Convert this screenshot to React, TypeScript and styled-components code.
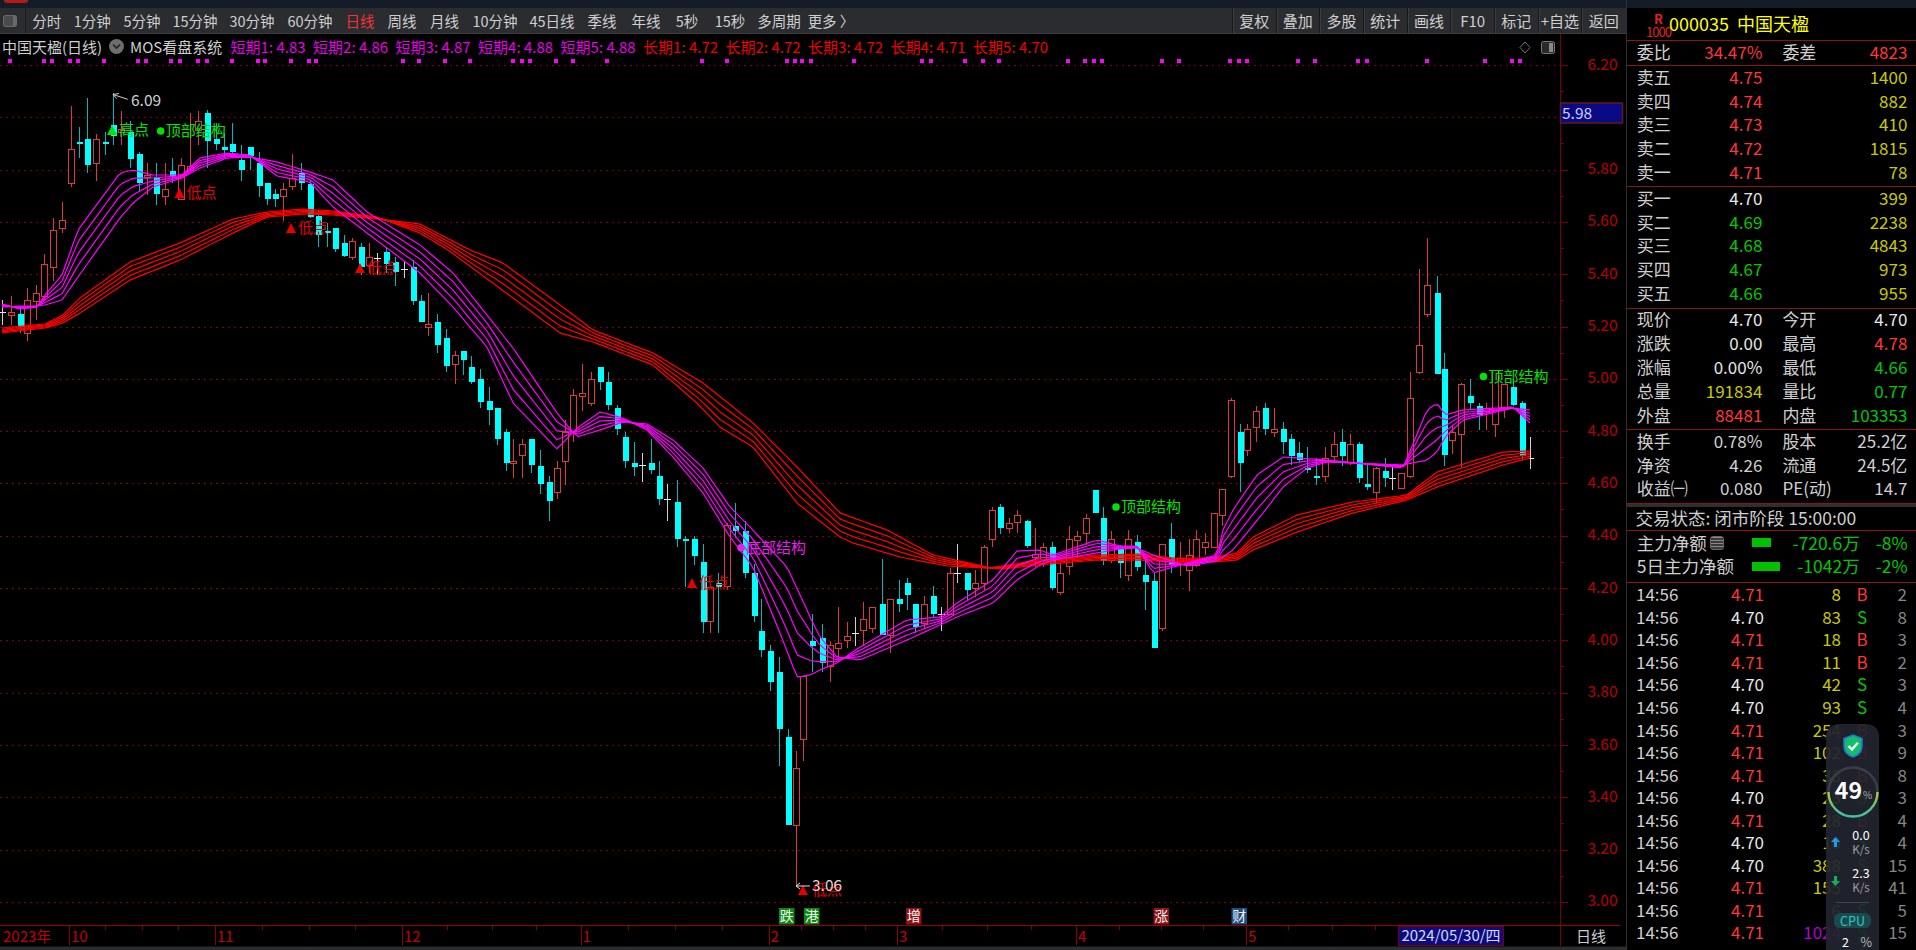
import React from "react";
import styled, { createGlobalStyle } from "styled-components";

const FONT = `"Noto Sans CJK SC", "Noto Sans", sans-serif`;
const RED = "#ff3636";
const GREEN = "#00c800";
const YELLOW = "#c8c800";
const LIGHT = "#cfcfcf";
const WHITE = "#e6e6e6";
const LINE = "#8e1212";

const Global = createGlobalStyle`
  html, body { margin: 0; padding: 0; background: #000; overflow: hidden; }
  #root { width: 1916px; height: 950px; }
  * { box-sizing: border-box; }
`;

const Page = styled.div`
  width: 1916px;
  height: 950px;
  background: #000;
  display: flex;
  flex-direction: column;
  font-family: ${FONT};
  color: ${LIGHT};
  overflow: hidden;
`;
const TopBar = styled.div`
  height: 8px;
  flex: none;
  background: #141c27;
  padding-left: 4px;
`;
const RedTab = styled.div`
  width: 24px;
  height: 3px;
  background: #b51a1a;
  border-radius: 0 0 4px 4px;
`;
const Main = styled.div`
  flex: 1;
  min-height: 0;
  display: flex;
`;
const LeftColumn = styled.div`
  width: 1626px;
  flex: none;
  display: flex;
  flex-direction: column;
`;
const Toolbar = styled.div`
  height: 26px;
  flex: none;
  display: flex;
  align-items: stretch;
  background: #2a2c2f;
  border-bottom: 1px solid #3c3d40;
  padding-right: 1px;
`;
const ToggleBox = styled.div`
  width: 26px;
  flex: none;
  display: flex;
  align-items: center;
  padding-left: 3px;
  border-right: 1px solid #1c1d1f;
`;
const ToggleIcon = styled.div`
  width: 14px;
  height: 12px;
  border-radius: 3px;
  background: #4a4b4d;
  border: 1px solid #6a6a6a;
  border-right-width: 4px;
`;
const Tab = styled.div<{ $w: number; $active?: boolean }>`
  width: ${(p) => p.$w}px;
  flex: none;
  display: flex;
  align-items: center;
  justify-content: center;
  white-space: pre;
  font-size: 14.5px;
  color: ${(p) => (p.$active ? "#f03434" : LIGHT)};
`;
const ToolRight = styled.div`
  margin-left: auto;
  display: flex;
`;
const ToolButton = styled.div`
  width: 43.7px;
  display: flex;
  align-items: center;
  justify-content: center;
  white-space: nowrap;
  font-size: 15px;
  color: ${LIGHT};
  border-left: 1px solid #161718;
  box-shadow: inset 1px 0 0 #3c3d40;
`;
const ChartArea = styled.div`
  position: relative;
  flex: 1;
  min-height: 0;
  overflow: hidden;
`;
const TitleRow = styled.div`
  position: absolute;
  left: 2px;
  top: 0;
  height: 24px;
  display: flex;
  align-items: center;
  font-size: 15px;
  white-space: nowrap;
`;
const StockTitle = styled.span`
  width: 107px;
  color: #cfcfcf;
`;
const RoundIcon = styled.span`
  width: 15px;
  height: 15px;
  border-radius: 50%;
  background: #6e6e6e;
  display: flex;
  align-items: center;
  justify-content: center;
  margin-right: 6px;
`;
const SystemName = styled.span`
  width: 100.6px;
  color: #cfcfcf;
`;
const Indicator = styled.span<{ $c: string }>`
  width: 82.5px;
  flex: none;
  color: ${(p) => p.$c};
`;
const ChartSvg = styled.svg`
  display: block;
  font-family: ${FONT};
`;

/* right panel */
const Panel = styled.div`
  position: relative;
  flex: 1;
  margin-top: -8px;
  background: #000;
  display: flex;
  flex-direction: column;
  border-left: 1px solid #2e2e2e;
  overflow: hidden;
`;
const Notch = styled.div`
  height: 8px;
  flex: none;
  background: #141c27;
  margin-left: -1px;
`;
const Section = styled.div<{ $h: number; $line?: boolean }>`
  height: ${(p) => p.$h + (p.$line === false ? 0 : 1)}px;
  flex: none;
  ${(p) => (p.$line === false ? "" : `border-bottom: 1px solid ${LINE};`)}
`;
const Header = styled.div`
  display: flex;
  align-items: center;
  height: 100%;
  padding: 0 0 2px 21px;
  color: #ffff00;
  font-size: 18px;
  white-space: nowrap;
`;
const Rank = styled.div`
  width: 21px;
  flex: none;
  margin-top: 4px;
  display: flex;
  flex-direction: column;
  align-items: center;
  color: #e02020;
  font-size: 13px;
  line-height: 13px;
  font-weight: 700;
`;
const RankNum = styled.span`
  font-weight: 400;
  font-size: 13px;
  letter-spacing: -1px;
`;
const Code = styled.span`
  margin-right: 8px;
`;
const InfoRow = styled.div<{ $h: number }>`
  display: grid;
  grid-template-columns: 64px 61.7px 20px 64px 61px;
  height: ${(p) => p.$h}px;
  align-items: center;
  padding-left: 9.7px;
  font-size: 17px;
  line-height: 20px;
  white-space: nowrap;
`;
const Label = styled.span`
  color: ${LIGHT};
`;
const Value = styled.span<{ $c?: string; $wide?: boolean }>`
  color: ${(p) => p.$c || WHITE};
  text-align: right;
  ${(p) => (p.$wide ? "grid-column: 4 / 6;" : "")}
`;
const Shift = styled.div<{ $y: number }>`
  margin-top: ${(p) => p.$y}px;
`;
const Band = styled.div`
  height: 3px;
  flex: none;
  background: #2f2f2f;
`;
const Status = styled.div`
  height: 100%;
  display: flex;
  align-items: center;
  padding: 0 0 3px 8.5px;
  font-size: 17.5px;
  white-space: nowrap;
  color: ${LIGHT};
`;
const FundRow = styled.div`
  display: grid;
  grid-template-columns: 115px 108px 48px;
  height: 23.4px;
  align-items: center;
  padding-left: 9.7px;
  font-size: 17.5px;
  line-height: 20px;
  white-space: nowrap;
`;
const FundLabel = styled.span`
  display: flex;
  align-items: center;
  gap: 3px;
  color: ${LIGHT};
`;
const DocIcon = styled.span`
  width: 14px;
  height: 14px;
  border-radius: 3px;
  border: 1px solid #666;
  background: repeating-linear-gradient(#8a8a8a 0 1px, #3a3a3a 1px 3px);
`;
const FundBarCell = styled.span`
  display: flex;
  align-items: center;
  justify-content: space-between;
  color: ${GREEN};
`;
const FundBar = styled.span<{ $w: number }>`
  width: ${(p) => p.$w}px;
  height: 9px;
  background: #00c000;
`;
const FundPct = styled.span`
  text-align: right;
  color: ${GREEN};
`;
const TickList = styled.div`
  flex: 1;
  margin-top: -2px;
  padding-top: 2px;
  overflow: hidden;
`;
const TickRow = styled.div`
  display: grid;
  grid-template-columns: 95px 40px 70px 42px 24px;
  height: 22.55px;
  align-items: center;
  padding-left: 9px;
  font-size: 17px;
  line-height: 20px;
  white-space: nowrap;
`;
const TickTime = styled.span`
  color: ${LIGHT};
`;
const TickPrice = styled.span<{ $up: boolean }>`
  color: ${(p) => (p.$up ? RED : WHITE)};
`;
const TickVol = styled.span<{ $big?: boolean }>`
  text-align: right;
  color: ${(p) => (p.$big ? "#b000d8" : YELLOW)};
`;
const TickSide = styled.span<{ $buy: boolean }>`
  text-align: center;
  color: ${(p) => (p.$buy ? RED : GREEN)};
`;
const TickCount = styled.span`
  text-align: right;
  color: #858585;
`;

/* floating monitor */
const Monitor = styled.div`
  position: absolute;
  left: 199px;
  top: 724px;
  width: 53px;
  height: 240px;
  border-radius: 12px;
  background: rgba(33, 37, 46, 0.93);
  display: flex;
  flex-direction: column;
  align-items: center;
  padding-top: 10px;
  color: #fff;
`;
const Ring = styled.div`
  display: grid;
  width: 52px;
  height: 52px;
  margin-top: 8px;
  align-items: center;
  justify-items: center;
  & > * {
    grid-area: 1 / 1;
  }
`;
const RingLabel = styled.div`
  display: flex;
  align-items: baseline;
  font-size: 23px;
  line-height: 26px;
  font-weight: 700;
  padding-left: 2px;
`;
const RingPct = styled.span`
  font-size: 10px;
  font-weight: 400;
  color: #a8abb2;
  margin-left: 1px;
`;
const Speed = styled.div`
  display: grid;
  grid-template-columns: 12px 1fr;
  width: 100%;
  margin-top: 10px;
  padding-left: 5px;
  align-items: center;
`;
const SpeedText = styled.div`
  display: flex;
  flex-direction: column;
  align-items: center;
  font-size: 12.5px;
  line-height: 14px;
`;
const SpeedUnit = styled.span`
  color: #9a9ea6;
  font-size: 11.5px;
`;
const Divider = styled.div`
  width: 33px;
  height: 1px;
  margin-top: 8px;
  background: #3b4450;
`;
const CpuPill = styled.div`
  width: 37px;
  height: 15px;
  margin-top: 10px;
  border-radius: 6px;
  background: #1b4a4e;
  color: #2fc6c6;
  font-size: 12.5px;
  line-height: 15px;
  text-align: center;
`;
const CpuValue = styled.div`
  width: 100%;
  margin-top: 7px;
  display: flex;
  justify-content: space-between;
  padding: 0 7px 0 16px;
  font-size: 12.5px;
  line-height: 14px;
`;
const CpuPct = styled.span`
  color: #b5b8be;
`;

/* ---------- chart data (coordinates read from the reference) ---------- */
type C = [number, number, number, number, number, string];
const groups: { ox: number; oy: number; d: C[] }[] = [
  { ox: 0, oy: 90, d: [
    [6,630,665,665,705,"w"],[32,618,665,673,705,"r"],[60,650,672,710,730,"c"],[82,595,630,730,752,"r"],[107,585,608,632,690,"r"],
    [133,492,522,618,630,"r"],[160,385,420,530,572,"r"],[186,335,390,415,430,"r"],[212,47,178,280,290,"r"],[236,110,155,162,205,"c"],
    [262,25,148,225,250,"c"],[288,133,148,220,272,"r"],[315,125,155,162,195,"c"],[340,10,105,138,165,"c"],[363,62,118,126,165,"r"],
    [390,92,125,205,235,"c"],[416,185,192,278,305,"c"],[441,220,255,262,315,"r"],[468,220,262,312,345,"c"],[494,220,298,320,345,"r"],
    [517,205,242,258,280,"c"],[543,205,226,328,330,"r"],[569,70,228,240,245,"r"],[595,62,92,118,165,"r"],[621,60,70,155,235,"c"],
    [648,100,148,162,180,"c"],[672,130,170,178,205,"c"],[697,100,163,186,200,"c"],[724,165,210,240,272,"c"],[750,170,172,198,240,"c"],
    [776,185,220,290,322,"c"],[800,280,280,328,345,"c"],[825,297,313,327,350,"c"],[850,280,298,320,392,"r"],[876,192,265,290,300,"r"],
    [904,220,248,278,300,"c"],[930,270,282,382,385,"c"],[954,360,378,436,470,"c"],[980,400,423,430,470,"c"],[1006,415,415,478,485,"c"],
    [1032,435,460,500,500,"c"],[1056,445,452,500,510,"r"],[1084,460,470,530,555,"c"],[1106,460,500,525,550,"r"],[1132,488,505,505,555,"w"],
    [1159,470,486,522,550,"c"],[1184,500,516,545,588,"c"],[1212,515,537,537,565,"w"],[1238,510,530,632,645,"c"],
  ]},
  { ox: 420, oy: 250, d: [
    [3,135,152,215,215,"c"],[25,130,222,230,258,"r"],[52,193,216,285,310,"c"],[78,238,265,350,365,"c"],[104,302,316,343,403,"r"],
    [128,302,302,330,375,"c"],[154,318,350,395,403,"c"],[180,358,388,458,475,"c"],[206,412,452,480,525,"c"],[232,475,475,567,585,"c"],
    [258,537,546,638,662,"c"],[280,568,632,638,685,"r"],[306,568,583,616,685,"r"],[334,568,568,645,670,"c"],[360,600,647,702,733,"c"],
    [386,677,696,754,812,"c"],[411,632,654,725,748,"r"],[434,510,545,632,705,"r"],[460,418,436,545,575,"r"],[486,343,428,436,482,"r"],
    [512,365,388,460,468,"r"],[540,350,350,394,420,"c"],[563,365,396,466,480,"c"],[590,465,475,537,555,"c"],[615,545,560,632,655,"c"],
    [641,575,640,653,678,"c"],[666,610,646,646,696,"w"],[692,568,640,660,672,"c"],[717,632,677,747,765,"c"],[741,703,747,747,812,"w"],
  ]},
  { ox: 660, oy: 500, d: [
    [50,-60,5,117,142,"c"],[76,107,118,124,262,"c"],[102,107,118,170,195,"c"],[128,132,185,365,400,"c"],[150,262,262,365,400,"r"],
    [175,220,250,262,400,"c"],[202,70,75,257,270,"r"],
  ]},
  { ox: 720, oy: 500, d: [
    [46,10,78,92,115,"c"],[76,62,92,218,235,"c"],[102,192,220,350,365,"c"],[124,298,392,450,470,"c"],[150,436,452,545,572,"c"],
    [176,470,516,686,798,"c"],[203,687,710,975,975,"c"],[228,752,803,975,1160,"r"],[250,528,528,718,782,"r"],[277,342,422,436,515,"c"],
    [305,373,415,490,515,"c"],[329,422,436,498,546,"r"],[355,320,430,444,478,"r"],[381,365,407,420,445,"r"],[404,350,398,398,438,"w"],
    [430,305,358,390,438,"r"],[457,320,320,384,400,"r"],[485,178,312,405,405,"c"],[510,297,297,405,460,"r"],[537,240,298,312,335,"c"],
    [560,235,250,285,330,"c"],[586,312,312,382,400,"c"],[611,288,312,368,385,"r"],[638,257,287,342,350,"c"],[663,320,343,343,392,"w"],
    [689,205,218,340,345,"r"],[712,132,218,218,250,"w"],[740,220,220,270,300,"c"],[765,210,250,265,290,"r"],[791,135,140,248,270,"r"],
    [817,20,30,118,140,"r"],[841,12,20,82,102,"c"],[866,55,68,84,100,"r"],[892,30,46,68,100,"r"],[920,60,62,138,145,"c"],
    [944,85,162,170,200,"r"],[970,130,140,175,200,"r"],[995,125,140,262,270,"c"],[1019,188,220,278,285,"r"],[1046,78,118,198,225,"r"],
    [1072,92,107,118,175,"r"],[1098,42,55,100,135,"r"],[1126,-30,-30,38,40,"c"],[1149,20,55,185,195,"c"],[1174,92,118,180,188,"r"],
    [1200,135,145,190,235,"c"],
  ]},
  { ox: 1120, oy: 230, d: [
    [25,900,928,1036,1052,"r"],[52,915,936,1010,1022,"c"],[76,980,1036,1058,1140,"c"],[102,1030,1052,1254,1255,"c"],[127,942,942,1195,1202,"r"],
    [154,880,928,1005,1030,"c"],[180,935,985,993,1038,"r"],[206,928,974,1020,1082,"r"],[229,900,928,1005,1010,"r"],[255,910,935,950,975,"r"],
    [281,848,848,950,950,"r"],[307,776,778,856,888,"r"],[333,505,510,738,745,"r"],[361,582,606,698,785,"c"],[382,582,598,662,678,"r"],
    [408,527,542,590,636,"r"],[436,520,535,598,615,"c"],[461,535,598,606,622,"r"],[488,575,598,636,672,"c"],[514,612,628,678,705,"c"],
    [538,635,670,690,700,"c"],[562,650,714,720,730,"c"],[589,685,737,744,765,"c"],[614,650,684,738,755,"r"],[641,605,643,678,700,"r"],
    [665,598,636,678,708,"c"],[690,612,643,698,706,"r"],[718,635,643,745,758,"c"],[742,700,762,770,780,"c"],[768,712,714,785,818,"r"],
    [796,685,722,744,772,"c"],[817,708,744,744,780,"w"],[843,728,728,772,772,"r"],[870,426,503,738,745,"r"],[896,118,346,426,432,"r"],
    [922,24,166,254,260,"r"],[950,137,190,432,432,"c"],[973,370,418,676,708,"c"],[997,585,605,628,672,"r"],[1023,458,462,612,712,"r"],
    [1051,448,497,518,540,"c"],[1077,520,528,555,600,"c"],[1098,520,535,545,600,"r"],[1125,420,420,583,622,"r"],[1151,462,462,535,565,"r"],
    [1179,450,472,525,528,"c"],[1205,512,520,680,690,"c"],[1230,620,684,684,716,"w"],
  ]},
];

const magA: number[][] = [[2,304],[20,309],[37,307],[45,295],[62,275],[78,230],[120,173],[133,170],[153,175],[182,175],[200,158],[227,153],[250,155],[277,176],[310,182],[333,207],[367,233],[420,273],[453,307],[487,347],[513,403],[557,449],[577,428],[600,412],[623,418],[647,430],[673,457],[703,493],[730,537],[753,567],[780,633],[797,677],[810,675],[820,670],[837,663],[860,647],[907,620],[940,617],[957,603],[993,580],[1017,551],[1040,550],[1053,555],[1097,540],[1120,546],[1137,546],[1153,573],[1187,563],[1217,555],[1223,530],[1233,510],[1257,475],[1283,457],[1327,460],[1403,468],[1427,410],[1437,403],[1445,415],[1463,410],[1513,407],[1530,423]];
const magB: number[][] = [[2,307],[20,306],[37,306],[45,305],[62,300],[78,277],[120,218],[133,203],[153,187],[182,178],[200,168],[227,158],[250,157],[277,162],[310,172],[333,180],[367,212],[420,245],[453,273],[487,315],[513,348],[557,413],[577,437],[600,430],[623,422],[647,424],[673,440],[703,468],[730,507],[750,527],[787,567],[807,610],[810,617],[820,637],[837,657],[860,660],[907,640],[940,625],[957,617],[993,603],[1017,580],[1040,565],[1053,560],[1097,553],[1120,549],[1137,548],[1153,555],[1187,566],[1217,561],[1233,550],[1263,513],[1283,487],[1307,468],[1327,462],[1403,465],[1427,460],[1437,452],[1445,437],[1463,420],[1513,408],[1530,410]];
const redA: number[][] = [[2,328],[45,324],[63,315],[80,298],[130,262],[180,243],[233,219],[267,212],[303,209],[333,211],[377,217],[420,233],[448,250],[513,298],[560,333],[593,342],[653,365],[697,403],[720,427],[753,447],[797,503],[840,537],[853,543],[900,557],[947,566],[987,568],[1003,566],[1037,560],[1097,555],[1140,554],[1173,558],[1213,558],[1237,553],[1253,537],[1297,515],[1353,502],[1407,495],[1437,472],[1503,452],[1530,451]];
const redB: number[][] = [[2,333],[45,328],[63,323],[80,313],[130,280],[180,260],[233,233],[267,217],[303,214],[333,215],[377,219],[420,224],[470,250],[503,263],[560,305],[593,330],[653,353],[703,383],[753,423],[797,467],[840,513],[887,530],[933,555],[973,564],[990,568],[1003,569],[1037,565],[1097,560],[1140,560],[1173,562],[1213,562],[1237,560],[1253,550],[1297,532],[1353,513],[1407,500],[1437,487],[1503,465],[1530,458]];

const at = (p: number[][], x: number) => {
  for (let i = 1; i < p.length; i++) {
    if (x <= p[i][0]) {
      const t = (x - p[i - 1][0]) / (p[i][0] - p[i - 1][0]);
      return p[i - 1][1] + (p[i][1] - p[i - 1][1]) * t;
    }
  }
  return p[p.length - 1][1];
};
const xs: number[] = [];
for (let x = 2; x <= 1530; x += 4.3) xs.push(x);
xs.push(1530);
const fan = (a: number[][], b: number[][], k: number) =>
  xs.map((x) => `${x.toFixed(1)},${(at(a, x) * (1 - k) + at(b, x) * k).toFixed(1)}`).join(" ");

const dotsZ1 = [25,108,128,172,190,254,338,358,418,442,485,506,568,632,650,714,757,775,987,1027,1091,1152,1257,1278,1299,1363,1404,1486].map((v) => v / 2.45);
const dotsZ2 = [151,212,359,380,398,420,524,692,713,797,840,879,1048,1091,1113,1131,1278,1321,1446,1467,1487].map((v) => 640 + v / 2.45);
const dotsZ3 = [155,195,292,313,450,584,644,664].map((v) => 1230 + v / 2.286);
const dots = [...dotsZ1, ...dotsZ2, ...dotsZ3];

const prices = ["6.20","6.00","5.80","5.60","5.40","5.20","5.00","4.80","4.60","4.40","4.20","4.00","3.80","3.60","3.40","3.20","3.00"];
const gridY = (i: number) => 65 + i * 52.31;

const smallTicks = [
  ...[172,232,291,428,504,580,730,803,875,1026,1102,1179,1308,1360,1412,1538].map((v) => v / 1.633),
  ...[65,168,377,477,578,780,885,985].map((v) => 960 + v / 2.376),
];
const months: [string, number][] = [["10",69],["11",215],["12",402],["1",580.5],["2",768.5],["3",897],["4",1076],["5",1246]];
const badges: [string, number, string][] = [["跌",779,"#0b8a12"],["港",804,"#0b8a12"],["增",906,"#8e1313"],["涨",1153.5,"#8e1313"],["财",1231.5,"#1f4f85"]];

const GREEN_MARK = "#00e400";
const RED_MARK = "#e80000";
const MAG_MARK = "#e622e6";

const Mark: React.FC<{ x: number; y: number; c: string; label: string; tx?: number }> = ({ x, y, c, label, tx }) => (
  <g>
    <polygon points={`${x},${y - 5} ${x + 5},${y + 5} ${x - 5},${y + 5}`} fill={c} />
    <text x={tx ?? x + 7} y={y + 5} fill={c} fontSize={15}>{label}</text>
  </g>
);
const Struct: React.FC<{ x: number; y: number; c: string; label: string }> = ({ x, y, c, label }) => (
  <g>
    <circle cx={x} cy={y} r={3.8} fill={c} />
    <text x={x + 5} y={y + 5.2} fill={c} fontSize={15}>{label}</text>
  </g>
);

const Chart: React.FC = () => (
  <ChartSvg width={1626} height={916} viewBox="0 34 1626 916">
    {prices.map((p, i) => (
      <g key={p}>
        <line x1={0} x2={1560} y1={gridY(i) + 0.5} y2={gridY(i) + 0.5} stroke="#7c0000" strokeDasharray="1.5 4.5" shapeRendering="crispEdges" />
        <line x1={1560} x2={1568} y1={gridY(i) + 0.5} y2={gridY(i) + 0.5} stroke="#7c0000" shapeRendering="crispEdges" />
        {i < prices.length - 1 && (
          <line x1={1560} x2={1564} y1={gridY(i) + 26.5} y2={gridY(i) + 26.5} stroke="#7c0000" shapeRendering="crispEdges" />
        )}
        <text x={1617.5} y={gridY(i) + 4.5} textAnchor="end" fontSize={15.5} fill="#b80000">{p}</text>
      </g>
    ))}
    {dots.map((x, i) => (
      <rect key={i} x={Math.round(x) - 2} y={59} width={4} height={4} fill="#ff00ff" />
    ))}

    {groups.flatMap((g, gi) =>
      g.d.map(([zx, wt, bt, bb, wb, kind], i) => {
        const x = Math.round(g.ox + zx / 3);
        const yv = (v: number) => g.oy + v / 3;
        const y1 = yv(wt), y2 = yv(wb), t = yv(bt), b = yv(bb);
        const key = `${gi}-${i}`;
        if (kind === "w") {
          return (
            <g key={key} shapeRendering="crispEdges">
              <line x1={x + 0.5} x2={x + 0.5} y1={y1} y2={y2} stroke="#cfcfcf" />
              <line x1={x - 3} x2={x + 4} y1={Math.round(t) + 0.5} y2={Math.round(t) + 0.5} stroke="#e8e8e8" />
            </g>
          );
        }
        if (kind === "c") {
          return (
            <g key={key} shapeRendering="crispEdges">
              <line x1={x + 0.5} x2={x + 0.5} y1={y1} y2={y2} stroke="#00b8be" />
              <rect x={x - 2} y={Math.round(t)} width={6} height={Math.max(2, Math.round(b - t))} fill="#00ffff" />
            </g>
          );
        }
        return (
          <g key={key} shapeRendering="crispEdges">
            <line x1={x + 0.5} x2={x + 0.5} y1={y1} y2={y2} stroke="#dc3a3a" />
            <rect x={x - 2.5} y={Math.round(t) + 0.5} width={6} height={Math.max(1, Math.round(b - t))} fill="#000" stroke="#dc3a3a" />
          </g>
        );
      })
    )}

    {[0, 0.25, 0.5, 0.75, 1].map((k) => (
      <polyline key={`r${k}`} points={fan(redA, redB, k)} fill="none" stroke="#ff0000" strokeWidth={1.25} strokeLinejoin="round" />
    ))}
    {[0, 0.25, 0.5, 0.75, 1].map((k) => (
      <polyline key={`m${k}`} points={fan(magA, magB, k)} fill="none" stroke="#ff00ff" strokeWidth={1.2} strokeLinejoin="round" />
    ))}

    <path d="M127.7 99.3 L113 94.5 M113 94.5 L119 93.5 M113 94.5 L116.5 98.5" stroke="#d0d0d0" strokeWidth={1} fill="none" />
    <text x={131} y={105.5} fill="#cfcfcf" fontSize={15.5}>6.09</text>
    <Mark x={112} y={130} c={GREEN_MARK} label="高点" />
    <Struct x={160.7} y={131} c={GREEN_MARK} label="顶部结构" />
    <Mark x={179.5} y={193} c={RED_MARK} label="低点" />
    <Mark x={291} y={228} c={RED_MARK} label="低点" />
    <Mark x={360} y={268} c={RED_MARK} label="低点" />
    <Struct x={741} y={547.7} c={MAG_MARK} label="底部结构" />
    <Mark x={692} y={583} c={RED_MARK} label="低点" />
    <Struct x={1116} y={507} c={GREEN_MARK} label="顶部结构" />
    <Struct x={1483.5} y={376.5} c={GREEN_MARK} label="顶部结构" />
    <Mark x={803} y={890} c={RED_MARK} label="低点" tx={812} />
    <path d="M810 886 L796 886 M796 886 L800 883 M796 886 L800 889" stroke="#e0e0e0" strokeWidth={1} fill="none" />
    <text x={812} y={891} fill="#d8d8d8" fontSize={15.5}>3.06</text>

    <polygon points="1525,42 1530,47.5 1525,53 1520,47.5" fill="none" stroke="#777" strokeWidth={1} />
    <rect x={1541.5} y={41.5} width={13} height={12} rx={2} fill="#2a2a2a" stroke="#777" />
    <rect x={1549} y={43} width={4} height={9} fill="#888" />

    <line x1={1560.5} x2={1560.5} y1={34} y2={946} stroke="#7c0000" shapeRendering="crispEdges" />
    <line x1={0} x2={1620} y1={925.5} y2={925.5} stroke="#9a0000" shapeRendering="crispEdges" />

    {badges.map(([t, x, c]) => (
      <g key={t}>
        <rect x={x} y={908} width={15.5} height={16.5} fill={c} />
        <text x={x + 7.75} y={921} textAnchor="middle" fontSize={14} fill="#f2f2f2">{t}</text>
      </g>
    ))}

    {smallTicks.map((x, i) => (
      <line key={i} x1={Math.round(x) + 0.5} x2={Math.round(x) + 0.5} y1={926} y2={930} stroke="#8a0000" shapeRendering="crispEdges" />
    ))}
    {months.map(([m, x]) => (
      <g key={m}>
        <line x1={x + 0.5} x2={x + 0.5} y1={926} y2={945} stroke="#8a0000" shapeRendering="crispEdges" />
        <text x={x + 2} y={942} fontSize={15} fill="#c00000">{m}</text>
      </g>
    ))}
    <text x={3} y={942} fontSize={15} fill="#c00000">2023年</text>
    <rect x={1398.5} y={926.5} width={105} height={19} fill="#0c0c80" stroke="#7c0000" />
    <text x={1451} y={941} textAnchor="middle" fontSize={15} fill="#d4d8f4">2024/05/30/四</text>
    <text x={1591} y={942} textAnchor="middle" fontSize={15} fill="#c8ccd0">日线</text>

    <rect x={1560.5} y={103} width={62} height={20} fill="#0a0a86" stroke="#641818" strokeWidth={1.5} />
    <text x={1562} y={118.5} fontSize={15.5} fill="#c9d0f0">5.98</text>

    <rect x={0} y={946.5} width={1626} height={4} fill="#2a2c2f" />
  </ChartSvg>
);

const tabs: [string, number, boolean?][] = [
  ["分时", 41.5], ["1分钟", 49.5], ["5分钟", 50], ["15分钟", 56], ["30分钟", 58], ["60分钟", 58],
  ["日线", 42, true], ["周线", 42], ["月线", 43], ["10分钟", 58], ["45日线", 56], ["季线", 44], ["年线", 44],
  ["5秒", 38], ["15秒", 48], ["多周期", 50], ["更多 〉", 54],
];
const tools = ["复权","叠加","多股","统计","画线","F10","标记","+自选","返回"];
const shortMas = ["4.83","4.86","4.87","4.88","4.88"];
const longMas = ["4.72","4.72","4.72","4.71","4.70"];
const sells = [["卖五","4.75","1400"],["卖四","4.74","882"],["卖三","4.73","410"],["卖二","4.72","1815"],["卖一","4.71","78"]];
const buys = [["买一","4.70","399",WHITE],["买二","4.69","2238",GREEN],["买三","4.68","4843",GREEN],["买四","4.67","973",GREEN],["买五","4.66","955",GREEN]];
const statsA: [string, string, string?, string?, string?, string?][] = [
  ["现价","4.70",WHITE,"今开","4.70",WHITE],
  ["涨跌","0.00",WHITE,"最高","4.78",RED],
  ["涨幅","0.00%",WHITE,"最低","4.66",GREEN],
  ["总量","191834",YELLOW,"量比","0.77",GREEN],
  ["外盘","88481",RED,"内盘","103353",GREEN],
];
const statsB: [string, string, string, string][] = [
  ["换手","0.78%","股本","25.2亿"],
  ["净资","4.26","流通","24.5亿"],
  ["收益㈠","0.080","PE(动)","14.7"],
];
const ticks: [string, string, string, string, string][] = [
  ["14:56","4.71","8","B","2"],["14:56","4.70","83","S","8"],["14:56","4.71","18","B","3"],["14:56","4.71","11","B","2"],
  ["14:56","4.70","42","S","3"],["14:56","4.70","93","S","4"],["14:56","4.71","254","B","3"],["14:56","4.71","102","B","9"],
  ["14:56","4.71","38","B","8"],["14:56","4.70","23","S","3"],["14:56","4.71","28","B","4"],["14:56","4.70","10","S","4"],
  ["14:56","4.70","388","S","15"],["14:56","4.71","155","B","41"],["14:56","4.71","6","S","5"],["14:56","4.71","1024","S","15"],
  ["15:00","4.70","2517","S","138"],
];

export default function App() {
  return (
    <Page>
      <Global />
      <TopBar><RedTab /></TopBar>
      <Main>
        <LeftColumn>
          <Toolbar>
            <ToggleBox><ToggleIcon /></ToggleBox>
            {tabs.map(([t, w, a]) => (
              <Tab key={t} $w={w} $active={a}>{t}</Tab>
            ))}
            <ToolRight>
              {tools.map((t) => <ToolButton key={t}>{t}</ToolButton>)}
            </ToolRight>
          </Toolbar>
          <ChartArea>
            <Chart />
            <TitleRow>
              <StockTitle>中国天楹(日线)</StockTitle>
              <RoundIcon>
                <svg width="9" height="7" viewBox="0 0 9 7"><path d="M1 1.5 L4.5 5 L8 1.5" stroke="#222" strokeWidth="1.6" fill="none" /></svg>
              </RoundIcon>
              <SystemName>MOS看盘系统</SystemName>
              {shortMas.map((v, i) => (
                <Indicator key={i} $c="#e600e6">短期{i + 1}: {v}</Indicator>
              ))}
              {longMas.map((v, i) => (
                <Indicator key={i} $c="#ee0000">长期{i + 1}: {v}</Indicator>
              ))}
            </TitleRow>
          </ChartArea>
        </LeftColumn>
        <Panel>
          <Notch />
          <Section $h={32}>
            <Header>
              <Rank>R<RankNum>1000</RankNum></Rank>
              <Code>000035</Code>中国天楹
            </Header>
          </Section>
          <Section $h={24}>
            <Shift $y={-1}>
              <InfoRow $h={24}>
                <Label>委比</Label><Value $c={RED}>34.47%</Value><span />
                <Label>委差</Label><Value $c={RED}>4823</Value>
              </InfoRow>
            </Shift>
          </Section>
          <Section $h={120}>
            <Shift $y={-1}>
              {sells.map(([l, p, q]) => (
                <InfoRow key={l} $h={23.75}>
                  <Label>{l}</Label><Value $c={RED}>{p}</Value><span /><Value $c={YELLOW} $wide>{q}</Value>
                </InfoRow>
              ))}
            </Shift>
          </Section>
          <Section $h={121}>
            <Shift $y={-1}>
              {buys.map(([l, p, q, c]) => (
                <InfoRow key={l} $h={23.75}>
                  <Label>{l}</Label><Value $c={c}>{p}</Value><span /><Value $c={YELLOW} $wide>{q}</Value>
                </InfoRow>
              ))}
            </Shift>
          </Section>
          <Section $h={120}>
            <Shift $y={-2}>
              {statsA.map(([a, b, c, d, e, f]) => (
                <InfoRow key={a} $h={24}>
                  <Label>{a}</Label><Value $c={c}>{b}</Value><span />
                  <Label>{d}</Label><Value $c={f}>{e}</Value>
                </InfoRow>
              ))}
            </Shift>
          </Section>
          <Section $h={73}>
            <Shift $y={-1}>
              {statsB.map(([a, b, c, d]) => (
                <InfoRow key={a} $h={23.7}>
                  <Label>{a}</Label><Value $c="#d0d0d0">{b}</Value><span />
                  <Label>{c}</Label><Value $c="#d0d0d0">{d}</Value>
                </InfoRow>
              ))}
            </Shift>
          </Section>
          <Band />
          <Section $h={23}>
            <Status>交易状态: 闭市阶段 15:00:00</Status>
          </Section>
          <Section $h={51}>
            <FundRow>
              <FundLabel>主力净额<DocIcon /></FundLabel>
              <FundBarCell><FundBar $w={19} />-720.6万</FundBarCell>
              <FundPct>-8%</FundPct>
            </FundRow>
            <FundRow>
              <FundLabel>5日主力净额</FundLabel>
              <FundBarCell><FundBar $w={28} />-1042万</FundBarCell>
              <FundPct>-2%</FundPct>
            </FundRow>
          </Section>
          <TickList>
            {ticks.map(([t, p, v, s, c], i) => (
              <TickRow key={i}>
                <TickTime>{t}</TickTime>
                <TickPrice $up={p === "4.71"}>{p}</TickPrice>
                <TickVol $big={v.length > 3}>{v}</TickVol>
                <TickSide $buy={s === "B"}>{s}</TickSide>
                <TickCount>{c}</TickCount>
              </TickRow>
            ))}
          </TickList>
          <Monitor>
            <svg width="20" height="24" viewBox="0 0 20 24">
              <path d="M10 1 L19 4.5 V12 C19 18 14.5 21.5 10 23 C5.5 21.5 1 18 1 12 V4.5 Z" fill="#0fbf6a" stroke="#2a6fd8" strokeWidth="1.6" />
              <path d="M5.5 12 L9 15.5 L14.8 8.8" fill="none" stroke="#fff" strokeWidth="2.4" />
            </svg>
            <Ring>
              <svg width="52" height="52" viewBox="0 0 52 52">
                <defs>
                  <linearGradient id="ringGrad" x1="0" y1="0" x2="0" y2="1">
                    <stop offset="0" stopColor="#c8c83a" />
                    <stop offset="0.55" stopColor="#62c47a" />
                    <stop offset="1" stopColor="#3cc0a8" />
                  </linearGradient>
                </defs>
                <path d="M1.5 26 A24.5 24.5 0 0 1 50.5 26" fill="none" stroke="#3a3e49" strokeWidth="2.4" />
                <path d="M1.5 26 A24.5 24.5 0 0 0 50.5 26" fill="none" stroke="url(#ringGrad)" strokeWidth="2.4" />
              </svg>
              <RingLabel>49<RingPct>%</RingPct></RingLabel>
            </Ring>
            <Speed>
              <svg width="9" height="11" viewBox="0 0 9 11"><path d="M4.5 0 L9 5 H6 V10 H3 V5 H0 Z" fill="#1e9bf0" /></svg>
              <SpeedText>0.0<SpeedUnit>K/s</SpeedUnit></SpeedText>
            </Speed>
            <Speed>
              <svg width="9" height="11" viewBox="0 0 9 11"><path d="M4.5 11 L9 6 H6 V1 H3 V6 H0 Z" fill="#10b060" /></svg>
              <SpeedText>2.3<SpeedUnit>K/s</SpeedUnit></SpeedText>
            </Speed>
            <Divider />
            <CpuPill>CPU</CpuPill>
            <CpuValue>2<CpuPct>%</CpuPct></CpuValue>
          </Monitor>
        </Panel>
      </Main>
    </Page>
  );
}
